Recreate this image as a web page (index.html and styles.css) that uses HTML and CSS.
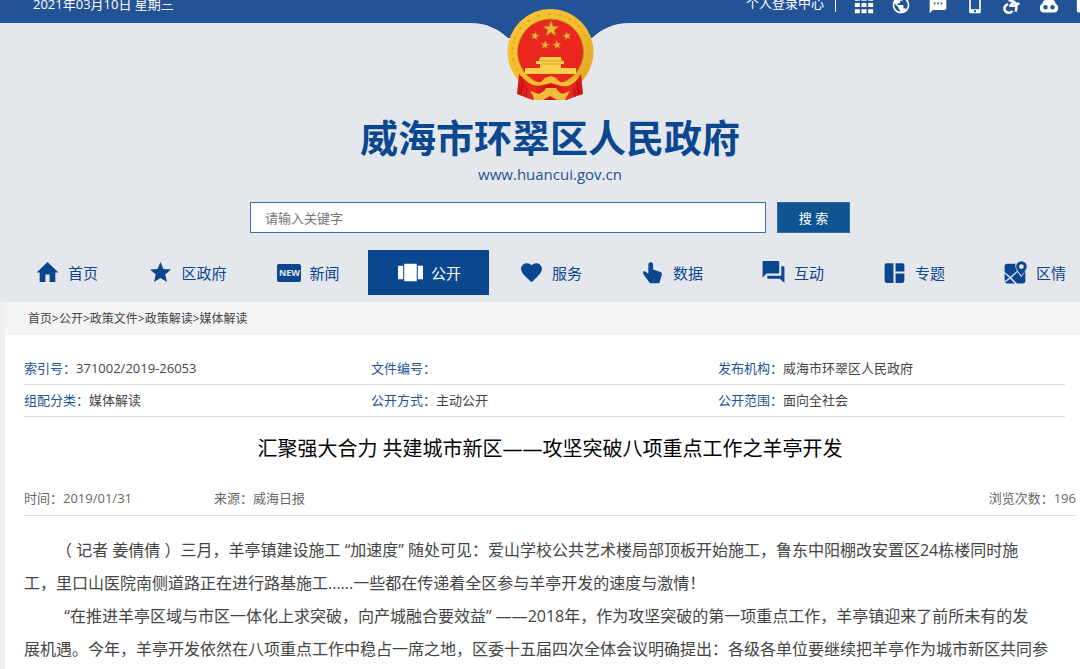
FILE: index.html
```html
<!DOCTYPE html>
<html lang="zh-CN">
<head>
<meta charset="utf-8">
<meta name="viewport" content="width=device-width, initial-scale=1">
<title>威海市环翠区人民政府</title>
<link rel="stylesheet" href="styles.css">
</head>
<body>
<div class="page">
  <div class="topbar">
    <div class="topbar-inner">
      <span class="date">2021年03月10日 星期三</span>
      <a class="login" href="#">个人登录中心</a>
      <div class="tools">
        <a href="#" aria-label="网站群"><svg viewBox="0 0 24 24"><path d="M1 2h6v5H1zM9 2h6v5H9zM17 2h6v5h-6zM1 9.500h6v5H1zM9 9.500h6v5H9zM17 9.500h6v5h-6zM1 17h6v5H1zM9 17h6v5H9zM17 17h6v5h-6z"/></svg></a>
        <a href="#" aria-label="语言"><svg viewBox="0 0 24 24"><path d="M12 2C6.480 2 2 6.480 2 12s4.480 10 10 10 10-4.480 10-10S17.520 2 12 2zm-1 17.930c-3.950-.49-7-3.850-7-7.930 0-.62.08-1.210.21-1.790L9 15v1c0 1.100.9 2 2 2v1.930zm6.900-2.540c-.26-.81-1-1.390-1.900-1.390h-1v-3c0-.55-.45-1-1-1H8v-2h2c.55 0 1-.45 1-1V7h2c1.100 0 2-.9 2-2v-.41c2.930 1.190 5 4.060 5 7.410 0 2.080-.8 3.970-2.100 5.390z"/></svg></a>
        <a href="#" aria-label="短信"><svg viewBox="0 0 24 24"><path d="M20 2H4c-1.100 0-2 .9-2 2v18l4-4h14c1.100 0 2-.9 2-2V4c0-1.100-.9-2-2-2zM9 11H7V9h2v2zm4 0h-2V9h2v2zm4 0h-2V9h2v2z"/></svg></a>
        <a href="#" aria-label="手机版"><svg viewBox="0 0 24 24"><path d="M17 0H7a2 2 0 0 0-2 2v18a2 2 0 0 0 2 2h10a2 2 0 0 0 2-2V2a2 2 0 0 0-2-2zM7 4h10v13H7zM12 18a1.400 1.400 0 1 1 0 2.800 1.400 1.400 0 0 1 0-2.800z" fill-rule="evenodd"/></svg></a>
        <a href="#" aria-label="无障碍"><svg viewBox="0 0 24 24"><circle cx="17" cy="3.500" r="2.200"/><path d="M8 6l6 2-4 5h7.500l-1 7M12.500 19a5.200 5.200 0 1 1-5-8M14 8l3 2.500h4" fill="none" stroke="#fff" stroke-width="3" stroke-linejoin="round"/></svg></a>
        <a href="#" aria-label="智能问答"><svg viewBox="0 0 24 24"><path d="M11 2h2v4h3c2.500 0 3.500 2 4 4.500 2 1 3 2.500 3 5 0 3.500-2 5.500-5 5.500H6c-3 0-5-2-5-5.500 0-2.500 1-4 3-5C4.500 8 5.500 6 8 6h3zM7.800 12a2.700 2.700 0 1 0 0 5.400 2.700 2.700 0 0 0 0-5.400zm8.400 0a2.700 2.700 0 1 0 0 5.400 2.700 2.700 0 0 0 0-5.400z" fill-rule="evenodd"/></svg></a>
        <a href="#" aria-label="邮箱"><svg viewBox="0 0 24 24"><path d="M1 4h20v17H3a2 2 0 0 1-2-2z"/></svg></a>
      </div>
    </div>
  </div>

  <header class="masthead">
    <svg class="emblem" viewBox="460 0 180 102" role="img" aria-label="国徽">
      <defs>
        <linearGradient id="gold" x1="0" y1="0" x2="1" y2="1"><stop offset="0" stop-color="#f7c836"/><stop offset=".5" stop-color="#f3bd2e"/><stop offset="1" stop-color="#dca323"/></linearGradient>
        <linearGradient id="drape" x1="0" y1="0" x2="1" y2="0"><stop offset="0" stop-color="#cf1414"/><stop offset=".2" stop-color="#e92820"/><stop offset=".5" stop-color="#ce1612"/><stop offset=".8" stop-color="#ed2a20"/><stop offset="1" stop-color="#c91412"/></linearGradient>
        <path id="star" d="M0-10 2.500-3.200 9.500-3.100 3.900 1.300 5.900 8.100 0 4.100-5.900 8.100-3.900 1.300-9.500-3.100-2.500-3.200z"/>
      </defs>
      <path fill="#235397" d="M460 0h180v23h-10c-17 0-28 6-38 15h-84c-10-9-21-15-38-15h-10z"/>
      <circle cx="550.500" cy="52" r="43" fill="url(#gold)"/>
      <circle cx="550.500" cy="52" r="38" fill="none" stroke="#dfa525" stroke-width="2" stroke-dasharray="3 4 1 3"/>
      <circle cx="550.500" cy="52" r="33" fill="#eb261f" stroke="#c58b21"/>
      <g fill="#e9b63b" stroke="#b77320" stroke-width="1">
        <use href="#star" transform="translate(551 29) scale(.85)"/>
        <use href="#star" transform="translate(535 36) rotate(12) scale(.45)"/>
        <use href="#star" transform="translate(567 36) rotate(-12) scale(.45)"/>
        <use href="#star" transform="translate(545 45) rotate(8) scale(.45)"/>
        <use href="#star" transform="translate(557 45) rotate(-8) scale(.45)"/>
      </g>
      <path fill="#fbd04b" d="M540 57h21l1 4h2v3h-3v4h15v6h-51v-6h15v-4h-4v-3h3z"/>
      <path stroke="#dda12c" d="M539 61h24M541 64h20" fill="none"/>
      <path fill="url(#drape)" d="M519 74l-2 20 10 4 6 2h34l7-3 9-3-2-20c-5 7-13 11-21 9l-5-3h-9l-5 3c-9 1-17-3-22-9z"/>
      <path fill="#f4bd32" d="M520 72c6 8 14 11 21 10l4-4 6-2 5 2 4 4c8 1 16-2 21-9-5 11-14 16-23 12l-7-2-8 2c-9 3-19-3-23-13z"/>
      <path fill="#efbd3a" d="M530 91l9 3 5-3 2-3h10l2 3 4 3 8-3-3 5-2 4h-8l-7-4-7 4h-9l-1-4z"/>
      <path d="M523 82l-3 13M577 82l2 13M527 88l-1 9M574 88l1 9" stroke="#ad1110" fill="none"/>
    </svg>
    <h1>威海市环翠区人民政府</h1>
    <a class="site-url" href="#">www.huancui.gov.cn</a>
    <form class="search">
      <input type="text" placeholder="请输入关键字" aria-label="请输入关键字">
      <button type="button">搜 索</button>
    </form>
    <nav class="nav">
      <a href="#"><svg viewBox="0 0 24 24"><path d="M10 21v-7h4v7h5.500v-9H22.500L12 2 1.500 12h3v9z"/></svg>首页</a>
      <a href="#"><svg viewBox="0 0 24 24"><path d="M12 17.270L18.180 21l-1.640-7.030L22 9.240l-7.190-.61L12 2 9.190 8.630 2 9.240l5.460 4.730L5.820 21z"/></svg>区政府</a>
      <a href="#"><span class="new-badge">NEW</span>新闻</a>
      <a href="#" class="active" aria-current="page"><svg viewBox="0 0 24 24"><path d="M6 3.500h12v17H6zM0 5.500h5v13H0zM19 5.500h5v13h-5z"/></svg>公开</a>
      <a href="#"><svg viewBox="0 0 24 24"><path d="M12 21.350l-1.450-1.320C5.400 15.360 2 12.280 2 8.500 2 5.420 4.420 3 7.500 3c1.740 0 3.410.81 4.500 2.090C13.090 3.810 14.760 3 16.500 3 19.580 3 22 5.420 22 8.500c0 3.780-3.400 6.860-8.550 11.540z"/></svg>服务</a>
      <a href="#"><svg viewBox="0 0 24 24"><path d="M8 4.500a2.300 2.300 0 0 1 4.600 0V9l7 2.600c1.100.4 1.600 1.300 1.400 2.400l-2.500 8.200H9.500L3.800 14.500c-.8-1-1-2.600-.4-3.700.9-.2 1.700 0 2.300.6L8 13.200z"/></svg>数据</a>
      <a href="#"><svg viewBox="0 0 24 24"><path d="M21.500 6h-2v9H6v2c0 .55.45 1 1 1h11l4.500 4V7c0-.55-.45-1-1-1zM17.500 12V2c0-.55-.45-1-1-1h-14c-.55 0-1 .45-1 1v15l4-4h11c.55 0 1-.45 1-1z"/></svg>互动</a>
      <a href="#"><svg viewBox="0 0 24 24"><path d="M4.500 3H11v19H4.500a2 2 0 0 1-2-2V5a2 2 0 0 1 2-2zM13 3h6.500a2 2 0 0 1 2 2v6H13zM13 13h8.500v7a2 2 0 0 1-2 2H13z"/></svg>专题</a>
      <a href="#"><svg viewBox="0 0 24 24"><path d="M4 3.500h8c-.5 2.500.3 4.700 1.500 7L7 16l-5.500-4.500V6A2.500 2.500 0 0 1 4 3.500zM1.500 13l4.500 4-4.500 3.500zM8 17l6-5.500 3.500 5 4-6v9A2.500 2.500 0 0 1 19 22.500h-5.500zM6.800 18l4.700 4.500H4a2.500 2.500 0 0 1-2-1z"/><path fill-rule="evenodd" d="M17.700 1.200a5.100 5.100 0 0 0-5.100 5.100c0 3 5.100 8.700 5.100 8.700s5.100-5.700 5.100-8.700a5.100 5.100 0 0 0-5.100-5.100zm0 2.800a2.300 2.300 0 1 1 0 4.600 2.300 2.300 0 0 1 0-4.600z"/></svg>区情</a>
    </nav>
  </header>

  <main class="content">
    <nav class="crumbs" aria-label="位置"><a href="#">首页</a>&gt;<a href="#">公开</a>&gt;<a href="#">政策文件</a>&gt;<a href="#">政策解读</a>&gt;<a href="#">媒体解读</a></nav>
    <dl class="meta">
      <div><dt>索引号：</dt><dd>371002/2019-26053</dd></div>
      <div><dt>文件编号：</dt><dd></dd></div>
      <div><dt>发布机构：</dt><dd>威海市环翠区人民政府</dd></div>
      <div><dt>组配分类：</dt><dd>媒体解读</dd></div>
      <div><dt>公开方式：</dt><dd>主动公开</dd></div>
      <div><dt>公开范围：</dt><dd>面向全社会</dd></div>
    </dl>
    <article class="article">
      <h2>汇聚强大合力 共建城市新区——攻坚突破八项重点工作之羊亭开发</h2>
      <div class="info">
        <span class="time">时间：2019/01/31</span>
        <span>来源：威海日报</span>
        <span class="views">浏览次数：196</span>
      </div>
      <div class="text">
        <p>（ 记者 姜倩倩 ）三月，羊亭镇建设施工 “加速度” 随处可见：爱山学校公共艺术楼局部顶板开始施工，鲁东中阳棚改安置区24栋楼同时施<br>工，里口山医院南侧道路正在进行路基施工......一些都在传递着全区参与羊亭开发的速度与激情！</p>
        <p>&nbsp;&nbsp;“在推进羊亭区域与市区一体化上求突破，向产城融合要效益” ——2018年，作为攻坚突破的第一项重点工作，羊亭镇迎来了前所未有的发<br>展机遇。今年，羊亭开发依然在八项重点工作中稳占一席之地，区委十五届四次全体会议明确提出：各级各单位要继续把羊亭作为城市新区共同参</p>
      </div>
    </article>
  </main>
</div>
</body>
</html>
```
FILE: styles.css
```css
* { box-sizing: border-box; }

body {
  margin: 0;
  overflow: hidden;
  background: #edf1f2;
  color: #444;
  font-family: "Open Sans", "Noto Sans CJK SC", sans-serif;
  font-size: 13px;
}

a { color: inherit; text-decoration: none; }
svg { display: block; fill: currentColor; }

/* The page is a little wider than the window and runs off its right edge. */
.page {
  display: flex;
  flex-direction: column;
  min-height: 100vh;
  margin-right: -20px;
}

.topbar {
  height: 23px;
  overflow: hidden;
  background: #235397;
  color: #fff;
}

.topbar-inner {
  display: flex;
  align-items: center;
  height: 34px;
  margin-top: -14px;
  padding: 0 4px 0 33px;
}

.login {
  margin-left: auto;
  padding-right: 11px;
  border-right: 1px solid #fff;
  line-height: 18px;
}

.tools {
  display: flex;
  gap: 17px;
  padding: 3px 0 0 18px;
}

.tools svg { width: 20px; height: 20px; }

.masthead {
  display: flex;
  flex-direction: column;
  align-items: center;
  padding-bottom: 7px;
  background: #e4e8ed;
  color: #0b478f;
}

.emblem {
  position: relative;
  width: 180px;
  height: 102px;
  margin-top: -23px;
}

h1 {
  margin: 11px 0 0;
  font-size: 38px;
  line-height: 48px;
}

.site-url { color: #235397; font-size: 15px; line-height: 26px; }

.search {
  display: flex;
  gap: 11px;
  width: 600px;
  height: 31px;
  margin: 15px 0 17px;
  font: inherit;
}

.search input {
  flex: 1;
  min-width: 0;
  padding: 0 14px;
  border: 1px solid #3871ab;
  background: #fff;
  font: inherit;
}

.search input::placeholder { color: #757575; }

.search button {
  width: 73px;
  padding: 0;
  border: 1px solid #2f6ba5;
  background: #0e5491;
  color: #fff;
  font: inherit;
}

.nav {
  display: grid;
  grid-template-columns: repeat(9, 1fr);
  align-self: stretch;
  padding: 0 6px 0 5px;
  font-size: 15px;
}

.nav a {
  display: flex;
  align-items: center;
  justify-content: center;
  gap: 8px;
  height: 45px;
  padding-left: 2px;
}

.nav svg { width: 25px; height: 25px; }
.nav .active { background: #0b478f; color: #fff; }

.new-badge {
  width: 24px;
  border-radius: 2px;
  background: #0b478f;
  color: #e4e8ed;
  font-size: 9px;
  font-weight: 700;
  line-height: 18px;
  text-align: center;
}

.content {
  flex: 1;
  margin-left: 5px;
  background: #fff;
}

.crumbs {
  padding-left: 23px;
  background: #f4f4f4;
  font-size: 12px;
  line-height: 33px;
}

.meta {
  display: grid;
  grid-template-columns: repeat(3, 1fr);
  margin: 0 35px 0 19px;
  padding-top: 18px;
}

.meta div {
  display: flex;
  border-bottom: 1px solid #ddd;
  line-height: 31px;
}

.meta dt { color: #235397; }
.meta dd { margin: 0; }

.article { margin: 0 24px 0 19px; }

h2 {
  margin: 0;
  color: #000;
  font-size: 20px;
  font-weight: 400;
  line-height: 64px;
  text-align: center;
}

.info {
  display: flex;
  border-bottom: 1px solid #ddd;
  color: #666;
  line-height: 34px;
}

.time { width: 190px; }
.views { margin-left: auto; }

.text {
  padding-top: 18px;
  font-size: 16px;
  line-height: 33px;
}

.text p { margin: 0; text-indent: 2em; white-space: nowrap; }
```
